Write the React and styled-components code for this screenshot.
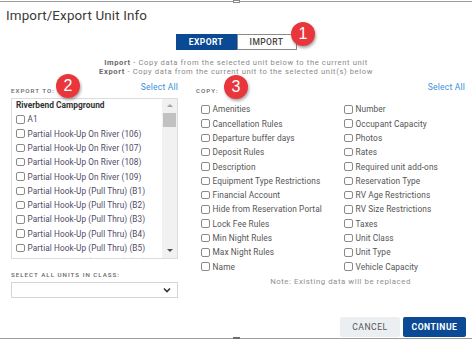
import React from "react"
import styled, { createGlobalStyle } from "styled-components"

const GlobalStyle = createGlobalStyle`
	html, body {
		margin: 0;
		padding: 0;
		background: #ffffff;
	}
	body {
		font-family: "Roboto", "Liberation Sans", sans-serif;
		color: #333;
	}
`

const Modal = styled.div`
	position: relative;
	box-sizing: border-box;
	width: 472px;
	height: 338px;
	margin-top: 1px;
	border-top: 1px solid #9d9d9d;
	border-bottom: 1px solid #9d9d9d;
	display: flex;
	flex-direction: column;
`

// little grab marks sitting on the top and bottom edges
const EdgeMark = styled.div`
	position: absolute;
	left: 233px;
	width: 7px;
	${p =>
		p.$bottom
			? "bottom: -1px; height: 2px; background: #6d6d6d;"
			: "top: -2px; height: 3px; box-sizing: border-box; border: 1px solid #8a8a8a; background: #fff;"}
`

const Title = styled.h1`
	margin: 0;
	padding: 5px 0 0 6px;
	font-size: 13.4px;
	font-weight: 400;
	color: #3a3a3a;
	line-height: 18px;
	letter-spacing: 0.15px;
`

const ToggleRow = styled.div`
	display: flex;
	justify-content: center;
	margin-top: 9px;
`

const ToggleButton = styled.div`
	box-sizing: border-box;
	width: ${p => p.$w}px;
	height: 16px;
	display: flex;
	align-items: center;
	justify-content: center;
	font-size: 8.5px;
	letter-spacing: 0.4px;
	font-weight: ${p => (p.$active ? 700 : 500)};
	background: ${p => (p.$active ? "#0a4993" : "#fff")};
	color: ${p => (p.$active ? "#fff" : "#444")};
	border: 1px solid ${p => (p.$active ? "#0a4993" : "#8a8a8a")};
`

const Help = styled.div`
	margin-top: 9px;
	text-align: center;
	font-size: 7.6px;
	line-height: 8.6px;
	letter-spacing: 0.62px;
	color: #8a8a8a;
	b {
		color: #6a6a6a;
		font-weight: 700;
	}
`

const Body = styled.div`
	display: flex;
	gap: 18px;
	padding: 0 7px 0 11px;
	margin-top: 7px;
`

const LeftCol = styled.div`
	width: 167px;
	display: flex;
	flex-direction: column;
`

const RightCol = styled.div`
	flex: 1;
	display: flex;
	flex-direction: column;
`

const LabelRow = styled.div`
	display: flex;
	justify-content: space-between;
	align-items: flex-end;
	height: 12px;
`

const SmallLabel = styled.span`
	font-size: 6.2px;
	line-height: 8px;
	letter-spacing: 1px;
	font-weight: 500;
	color: #666;
	text-transform: uppercase;
`

const SelectAll = styled.span`
	font-size: 8.5px;
	line-height: 10px;
	color: #3a8fd8;
	letter-spacing: 0.2px;
	padding-bottom: 3px;
`

const ListBox = styled.div`
	margin-top: 3px;
	height: 161px;
	box-sizing: border-box;
	border: 1px solid #dcdcdc;
	display: flex;
	overflow: hidden;
`

const ListContent = styled.div`
	flex: 1;
	overflow: hidden;
	padding: 0 0 0 4px;
`

const GroupHead = styled.div`
	font-size: 8.4px;
	font-weight: 700;
	color: #333;
	height: 13px;
	line-height: 13px;
`

const Item = styled.label`
	display: flex;
	align-items: center;
	gap: 3px;
	height: 14.3px;
	font-size: ${p => p.$size || 8.2}px;
	letter-spacing: 0.1px;
	color: ${p => p.$color || "#4e4a66"};
	white-space: nowrap;
`

const Box = styled.span`
	box-sizing: border-box;
	flex: none;
	width: 8.5px;
	height: 8.5px;
	border: 1px solid #8a8a8a;
	border-radius: 2px;
	background: #fff;
`

const Scrollbar = styled.div`
	width: 15px;
	background: #f1f1f1;
	display: flex;
	flex-direction: column;
	align-items: center;
`

const Arrow = styled.div`
	width: 0;
	height: 0;
	border-left: 3.5px solid transparent;
	border-right: 3.5px solid transparent;
	${p =>
		p.$up
			? "border-bottom: 3.5px solid #a3a3a3; margin: 5px 0 6px;"
			: "border-top: 3.5px solid #505050; margin: auto 0 6px;"}
`

const Thumb = styled.div`
	width: 13px;
	height: 14px;
	background: #c1c1c1;
`

const ClassLabel = styled(SmallLabel)`
	margin-top: 12px;
	display: block;
`

const SelectBox = styled.div`
	margin-top: 3px;
	height: 16px;
	box-sizing: border-box;
	border: 1px solid #d6d6d6;
	display: flex;
	align-items: center;
	justify-content: flex-end;
	padding-right: 6px;
`

const CopyGrid = styled.div`
	margin-top: 7px;
	display: grid;
	grid-template-columns: 143px 1fr;
	padding-left: 5px;
`

const Column = styled.div`
	display: flex;
	flex-direction: column;
`

const Note = styled.div`
	margin-top: 3px;
	text-align: center;
	font-size: 7.8px;
	line-height: 10px;
	letter-spacing: 0.55px;
	color: #8f8f8f;
	padding-left: 20px;
`

const Footer = styled.div`
	margin-top: auto;
	display: flex;
	justify-content: flex-end;
	gap: 3px;
	padding: 0 6px 1px 0;
`

const Button = styled.div`
	width: ${p => p.$w}px;
	height: 20px;
	border-radius: 2px;
	display: flex;
	align-items: center;
	justify-content: center;
	font-size: 8.6px;
	letter-spacing: 0.5px;
	font-weight: ${p => (p.$primary ? 700 : 400)};
	background: ${p => (p.$primary ? "#0b4a94" : "#eceff1")};
	color: ${p => (p.$primary ? "#fff" : "#555")};
`

const Badge = styled.div`
	position: absolute;
	left: ${p => p.$x - 12}px;
	top: ${p => p.$y - 12}px;
	width: 24px;
	height: 24px;
	border-radius: 50%;
	background: #e8363c;
	color: #fff;
	font-size: 16px;
	line-height: 24px;
	text-align: center;
	box-shadow: 1px 2px 3px rgba(0, 0, 0, 0.35);
	font-family: "Liberation Sans", "Roboto", sans-serif;
`

const units = [
	"A1",
	"Partial Hook-Up On River (106)",
	"Partial Hook-Up On River (107)",
	"Partial Hook-Up On River (108)",
	"Partial Hook-Up On River (109)",
	"Partial Hook-Up (Pull Thru) (B1)",
	"Partial Hook-Up (Pull Thru) (B2)",
	"Partial Hook-Up (Pull Thru) (B3)",
	"Partial Hook-Up (Pull Thru) (B4)",
	"Partial Hook-Up (Pull Thru) (B5)",
	"Partial Hook-Up (Pull Thru) (B6)"
]

const copyLeft = [
	"Amenities",
	"Cancellation Rules",
	"Departure buffer days",
	"Deposit Rules",
	"Description",
	"Equipment Type Restrictions",
	"Financial Account",
	"Hide from Reservation Portal",
	"Lock Fee Rules",
	"Min Night Rules",
	"Max Night Rules",
	"Name"
]

const copyRight = [
	"Number",
	"Occupant Capacity",
	"Photos",
	"Rates",
	"Required unit add-ons",
	"Reservation Type",
	"RV Age Restrictions",
	"RV Size Restrictions",
	"Taxes",
	"Unit Class",
	"Unit Type",
	"Vehicle Capacity"
]

const Chevron = () => (
	<svg width="8" height="6" viewBox="0 0 8 6">
		<path d="M1 1.5 L4 4.5 L7 1.5" fill="none" stroke="#333" strokeWidth="1.6" />
	</svg>
)

const App = () => {
	return (
		<>
			<GlobalStyle />
			<Modal>
				<EdgeMark />
				<Title>Import/Export Unit Info</Title>
				<ToggleRow>
					<ToggleButton $active $w={61}>EXPORT</ToggleButton>
					<ToggleButton $w={60}>IMPORT</ToggleButton>
				</ToggleRow>
				<Help>
					<b>Import</b> - Copy data from the selected unit below to the current unit
					<br />
					<b>Export</b> - Copy data from the current unit to the selected unit(s) below
				</Help>
				<Body>
					<LeftCol>
						<LabelRow>
							<SmallLabel>Export to:</SmallLabel>
							<SelectAll>Select All</SelectAll>
						</LabelRow>
						<ListBox>
							<ListContent>
								<GroupHead>Riverbend Campground</GroupHead>
								{units.map(u => (
									<Item key={u}>
										<Box />
										{u}
									</Item>
								))}
							</ListContent>
							<Scrollbar>
								<Arrow $up />
								<Thumb />
								<Arrow />
							</Scrollbar>
						</ListBox>
						<ClassLabel>Select all units in class:</ClassLabel>
						<SelectBox>
							<Chevron />
						</SelectBox>
					</LeftCol>
					<RightCol>
						<LabelRow>
							<SmallLabel>Copy:</SmallLabel>
							<SelectAll>Select All</SelectAll>
						</LabelRow>
						<CopyGrid>
							<Column>
								{copyLeft.map(c => (
									<Item key={c} $color="#555" $size={8.3}>
										<Box />
										{c}
									</Item>
								))}
							</Column>
							<Column>
								{copyRight.map(c => (
									<Item key={c} $color="#555" $size={8.3}>
										<Box />
										{c}
									</Item>
								))}
							</Column>
						</CopyGrid>
						<Note>Note: Existing data will be replaced</Note>
					</RightCol>
				</Body>
				<Footer>
					<Button $w={60}>CANCEL</Button>
					<Button $primary $w={63}>CONTINUE</Button>
				</Footer>
				<EdgeMark $bottom />
				<Badge $x={303} $y={32}>1</Badge>
				<Badge $x={68} $y={84}>2</Badge>
				<Badge $x={236} $y={85}>3</Badge>
			</Modal>
		</>
	)
}

export default App
